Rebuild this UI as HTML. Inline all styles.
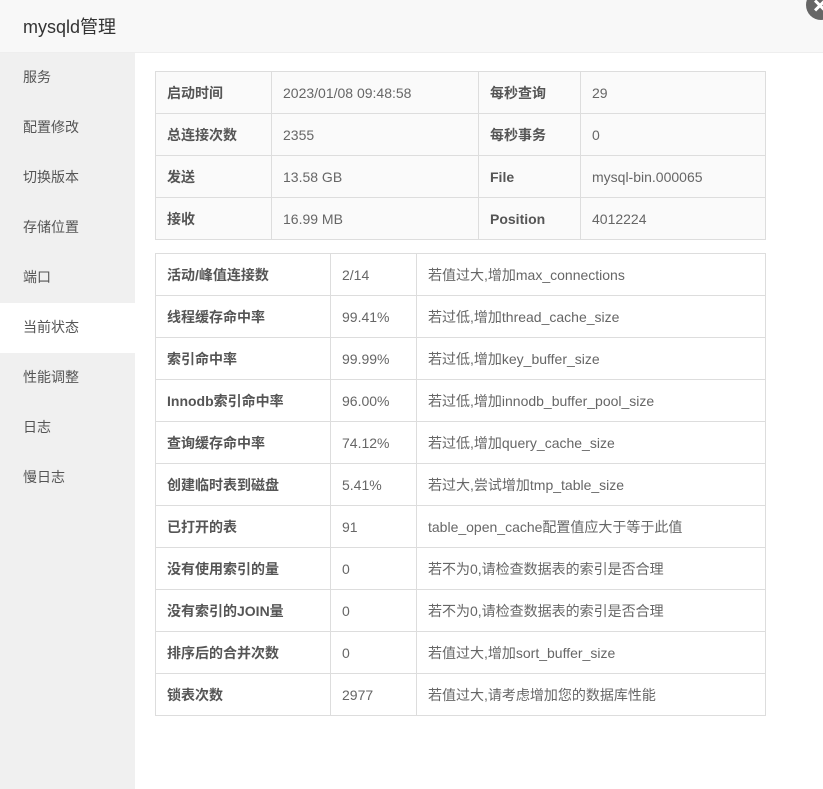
<!DOCTYPE html>
<html><head><meta charset="utf-8"><style>
*{margin:0;padding:0;box-sizing:border-box}
body{width:823px;height:789px;overflow:hidden;background:#fff;font-family:"Liberation Sans","Noto Sans CJK SC",sans-serif;color:#555;position:relative}
.hd{position:absolute;left:0;top:0;width:823px;height:53px;background:#f8f8f8;border-bottom:1px solid #eee;font-size:18px;color:#333;padding-left:23px;line-height:54px}
.close{position:absolute;left:806px;top:-10px;width:30px;height:30px;border-radius:50%;background:#666}
.close:before,.close:after{content:"";position:absolute;left:7px;top:14px;width:14px;height:3px;background:#fff;transform:rotate(45deg)}
.close:after{transform:rotate(-45deg)}
.sb{position:absolute;left:0;top:53px;width:135px;height:736px;background:#f0f0f0}
.sb div{height:50px;line-height:48px;padding-left:23px;font-size:14px;color:#555}
.sb .on{background:#fff}
table{position:absolute;left:155px;border-collapse:collapse;font-size:14px;table-layout:fixed}
td{border:1px solid #ddd;height:42px;padding:0 0 0 11px;color:#666;line-height:20px;vertical-align:middle}
td.b{font-weight:bold;color:#555}
.t1{top:71px;width:610px;background:#fafafa}
.t2{top:253px;width:610px}
</style></head><body>
<div class="hd">mysqld管理</div>
<div class="close"></div>
<div class="sb">
<div>服务</div><div>配置修改</div><div>切换版本</div><div>存储位置</div><div>端口</div><div class="on">当前状态</div><div>性能调整</div><div>日志</div><div>慢日志</div>
</div>
<table class="t1">
<colgroup><col style="width:116px"><col style="width:207px"><col style="width:102px"><col style="width:185px"></colgroup>
<tr><td class="b">启动时间</td><td>2023/01/08 09:48:58</td><td class="b">每秒查询</td><td>29</td></tr>
<tr><td class="b">总连接次数</td><td>2355</td><td class="b">每秒事务</td><td>0</td></tr>
<tr><td class="b">发送</td><td>13.58 GB</td><td class="b">File</td><td>mysql-bin.000065</td></tr>
<tr><td class="b">接收</td><td>16.99 MB</td><td class="b">Position</td><td>4012224</td></tr>
</table>
<table class="t2">
<colgroup><col style="width:175px"><col style="width:86px"><col style="width:349px"></colgroup>
<tr><td class="b">活动/峰值连接数</td><td>2/14</td><td>若值过大,增加max_connections</td></tr>
<tr><td class="b">线程缓存命中率</td><td>99.41%</td><td>若过低,增加thread_cache_size</td></tr>
<tr><td class="b">索引命中率</td><td>99.99%</td><td>若过低,增加key_buffer_size</td></tr>
<tr><td class="b">Innodb索引命中率</td><td>96.00%</td><td>若过低,增加innodb_buffer_pool_size</td></tr>
<tr><td class="b">查询缓存命中率</td><td>74.12%</td><td>若过低,增加query_cache_size</td></tr>
<tr><td class="b">创建临时表到磁盘</td><td>5.41%</td><td>若过大,尝试增加tmp_table_size</td></tr>
<tr><td class="b">已打开的表</td><td>91</td><td>table_open_cache配置值应大于等于此值</td></tr>
<tr><td class="b">没有使用索引的量</td><td>0</td><td>若不为0,请检查数据表的索引是否合理</td></tr>
<tr><td class="b">没有索引的JOIN量</td><td>0</td><td>若不为0,请检查数据表的索引是否合理</td></tr>
<tr><td class="b">排序后的合并次数</td><td>0</td><td>若值过大,增加sort_buffer_size</td></tr>
<tr><td class="b">锁表次数</td><td>2977</td><td>若值过大,请考虑增加您的数据库性能</td></tr>
</table>
</body></html>
